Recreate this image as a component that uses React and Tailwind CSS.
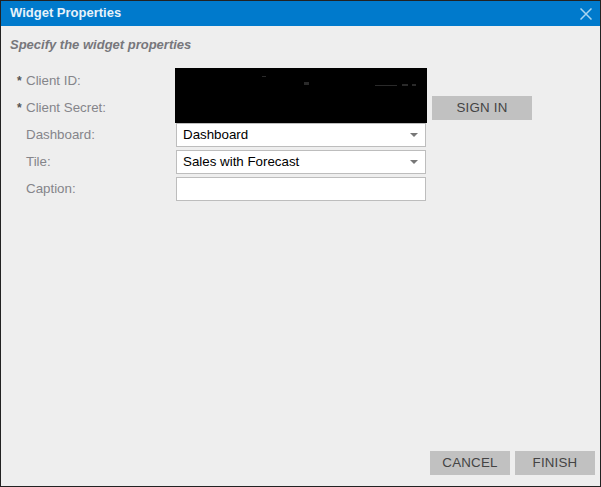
const labelClass = 'flex items-center text-[13.33px] text-[#85858a]';
const fieldClass = 'flex items-center justify-between h-6 w-[250px] bg-white border border-[#bdbdbd] pl-[6px] pr-[7px] text-[13.33px] text-black';

function Label({ required, children }) {
  return (
    <div className={labelClass}>
      <span className="w-[9px] -mt-px text-xs font-bold text-[#555]">{required ? '*' : ''}</span>
      {children}
    </div>
  );
}

function SelectField({ value }) {
  return (
    <div className={fieldClass}>
      <span>{value}</span>
      <span className="w-0 h-0 border-x-[4px] border-x-transparent border-t-[4px] border-t-[#777]" />
    </div>
  );
}

function Button({ children }) {
  return (
    <button className="h-6 bg-[#c1c1c1] text-[13.33px] tracking-[0.2px] text-[#444]">
      {children}
    </button>
  );
}

export default function App() {
  return (
    <div className="w-[601px] h-[487px] flex flex-col border border-[#222] bg-[#eeeeee] font-['Liberation_Sans',Arial,sans-serif]">
      <div className="flex items-center justify-between h-[25px] shrink-0 bg-[#007acc] pl-[9px] pr-2">
        <h1 className="-mt-[1px] text-[13px] font-bold text-[#e6f2fa]">Widget Properties</h1>
        <svg className="mt-[1px]" width="12" height="12" viewBox="0 0 12 12" fill="none" stroke="#a9d5f0" strokeWidth="1.5">
          <path d="M0.5 0.5 L11.5 11.5 M11.5 0.5 L0.5 11.5" />
        </svg>
      </div>

      <p className="mt-[11px] pl-[9px] text-[13px] leading-[16px] font-bold italic text-[#77777c]">
        Specify the widget properties
      </p>

      <div className="mt-[16px] pl-[16px] grid grid-cols-[159px_250px_100px] grid-rows-[24px_24px_24px_24px_24px] gap-y-[3px]">
        <Label required>Client ID:</Label>
        <div className="row-span-2 relative -mt-px -ml-px w-[252px] h-[55px] bg-black">
          <svg className="absolute inset-0" width="252" height="55" fill="#2a2a2a">
            <rect x="87" y="8" width="4" height="1" />
            <rect x="129" y="14" width="5" height="3" />
            <rect x="200" y="17" width="22" height="1" />
            <rect x="227" y="16" width="6" height="2" />
            <rect x="237" y="16" width="4" height="2" />
          </svg>
        </div>
        <div />
        <Label required>Client Secret:</Label>
        <div className="ml-[6px]">
          <div className="grid w-[100px]">
            <Button>SIGN IN</Button>
          </div>
        </div>
        <Label>Dashboard:</Label>
        <SelectField value="Dashboard" />
        <div />
        <Label>Tile:</Label>
        <SelectField value="Sales with Forecast" />
        <div />
        <Label>Caption:</Label>
        <div className={fieldClass} />
        <div />
      </div>

      <div className="mt-auto mb-[11px] mr-[5px] flex justify-end gap-[5px]">
        <div className="grid w-20"><Button>CANCEL</Button></div>
        <div className="grid w-20"><Button>FINISH</Button></div>
      </div>
    </div>
  );
}
